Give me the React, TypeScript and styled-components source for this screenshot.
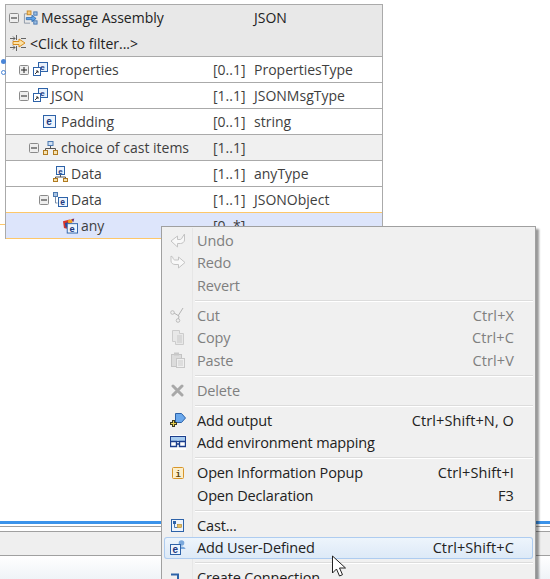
import React from "react";
import styled, { createGlobalStyle } from "styled-components";

const Global = createGlobalStyle`
  html, body { margin: 0; padding: 0; background: #fff; overflow: hidden; }
  body { font-family: "Open Sans", "Liberation Sans", sans-serif; }
`;

const Page = styled.div`
  position: relative;
  width: 550px;
  height: 579px;
  overflow: hidden;
  display: flex;
  flex-direction: column;
`;

const Table = styled.div`
  width: 378px;
  margin: 4px 0 0 5px;
  border: 1px solid #aaaaaa;
  border-bottom: 0;
  box-sizing: border-box;
  font-size: 14px;
  color: #3f3f3f;
`;

const Header = styled.div`
  background: #e8e8e8;
  height: 52px;
  border-bottom: 1px solid #aaaaaa;
  box-sizing: border-box;
`;

const HeaderRow = styled.div`
  display: grid;
  grid-template-columns: 207px 41px 1fr;
  height: 25px;
  align-items: center;
  color: #222;
`;

const FilterRow = styled.div`
  display: flex;
  align-items: center;
  height: 26px;
  padding-left: 4px;
  gap: 4px;
  color: #222;
`;

const Row = styled.div<{ $tone?: "plain" | "group" | "selected" }>`
  display: grid;
  grid-template-columns: 207px 41px 1fr;
  height: 26px;
  align-items: center;
  box-sizing: border-box;
  background: ${(p) =>
    p.$tone === "group" ? "#f0f0f0" : p.$tone === "selected" ? "#dde5fb" : "#fff"};
  border-bottom: 1px solid ${(p) => (p.$tone === "selected" ? "#fdc76a" : "#aaaaaa")};
  ${(p) => p.$tone === "selected" && "box-shadow: 0 -1px 0 #fdc76a;"}
`;

const NameCell = styled.div<{ $level: number }>`
  display: flex;
  align-items: center;
  padding-left: ${(p) => 3 + p.$level * 10}px;
`;

const ExpanderSlot = styled.span`
  display: inline-flex;
  width: 14px;
  flex: none;
`;

const Expander = styled.svg`
  width: 10px;
  height: 10px;
  display: block;
`;

const IconSlot = styled.span`
  display: inline-flex;
  width: 15px;
  height: 16px;
  margin-right: 3px;
  flex: none;
  align-items: center;
`;

const BlueDot = styled.span`
  position: absolute;
  left: 1px;
  top: 59px;
  width: 5px;
  height: 5px;
  background: #4a86d8;
  border-radius: 50%;
`;

const HollowDot = styled.span`
  position: absolute;
  left: 1px;
  top: 70px;
  width: 3px;
  height: 3px;
  border: 1px solid #4a86d8;
  border-radius: 50%;
`;

const OrangeTick = styled.span`
  position: absolute;
  left: 0;
  top: 224px;
  width: 5px;
  height: 1px;
  background: #fdc76a;
`;

const Spacer = styled.div`
  flex: 1;
`;

const Footer = styled.div`
  flex: none;
`;

const BlueRule = styled.div`
  height: 3px;
  background: #3b93ea;
`;

const TabStrip = styled.div`
  height: 4px;
  margin-top: 2px;
  background: #fff;
  border-top: 1px solid #a0a0a0;
  border-bottom: 1px solid #a0a0a0;
`;

const GreyBand = styled.div`
  height: 23px;
  background: #efefef;
  border-bottom: 1px solid #a0a0a0;
`;

const FadeBand = styled.div`
  height: 23px;
  background: linear-gradient(#ffffff, #eff3f7);
`;

const Menu = styled.div`
  position: absolute;
  left: 161px;
  top: 226px;
  width: 375px;
  height: 370px;
  box-sizing: border-box;
  background: #f0f0f0;
  border: 1px solid #a0a0a0;
  box-shadow: 3px 3px 2px rgba(0, 0, 0, 0.4);
  padding: 2px 2px;
  font-size: 14.5px;
  letter-spacing: -0.15px;
  color: #222;
`;

const Gutter = styled.span`
  position: absolute;
  left: 30px;
  top: 1px;
  bottom: 0;
  width: 1px;
  background: #e6e6e6;
`;

const Item = styled.div<{ $disabled?: boolean; $hover?: boolean }>`
  position: relative;
  display: grid;
  grid-template-columns: 33px 1fr auto;
  align-items: center;
  height: 22.5px;
  box-sizing: border-box;
  padding-right: 19px;
  color: ${(p) => (p.$disabled ? "#7f7f7f" : "#222")};
  ${(p) =>
    p.$hover &&
    `
    background: linear-gradient(#eef5fc, #dce9f7);
    box-shadow: inset 0 0 0 1px #aeccf0;
    border-radius: 3px;
  `}
`;

const ItemIcon = styled.span`
  display: flex;
  justify-content: center;
  padding-right: 6px;
`;

const Shortcut = styled.span`
  letter-spacing: 0.1px;
`;

const Separator = styled.div`
  height: 1px;
  margin: 3px 0 3.5px 31px;
  background: #dcdcdc;
  box-shadow: 0 1px 0 #fff;
`;

const Pointer = styled.svg`
  position: absolute;
  left: 331px;
  top: 555px;
  width: 18px;
  height: 24px;
`;

const Plus = ({ open }: { open?: boolean }) => (
  <Expander viewBox="0 0 10 10">
    <rect x="0.5" y="0.5" width="9" height="9" rx="1" fill="#eee" stroke="#8a8a8a" />
    <path d="M2 5h6" stroke="#222" />
    {!open && <path d="M5 2v6" stroke="#222" />}
  </Expander>
);

const ElementRef = () => (
  <svg width="15" height="15" viewBox="0 0 15 15">
    <rect x="5.5" y="0.5" width="9" height="9" fill="#e8f0fb" stroke="#2d62a8" />
    <text x="7.3" y="8" fontSize="8" fontWeight="700" fill="#20387f" fontFamily="Liberation Sans">e</text>
    <rect x="0.5" y="5.5" width="7" height="8" fill="#fff" stroke="#2d62a8" />
    <path d="M2 12l3-3M3 9h2v2" stroke="#333" fill="none" />
  </svg>
);

const ElementBox = () => (
  <svg width="13" height="13" viewBox="0 0 13 13">
    <rect x="0.5" y="0.5" width="12" height="12" fill="#eef4fc" stroke="#2d62a8" />
    <text x="3.2" y="10" fontSize="10" fontWeight="700" fill="#20387f" fontFamily="Liberation Sans">e</text>
  </svg>
);

const Assembly = () => (
  <svg width="16" height="16" viewBox="0 0 16 16">
    <path d="M1.5 3.5h4M1.5 3.5v10h6" stroke="#8c98a8" fill="none" />
    <rect x="4.5" y="0.5" width="4" height="4" fill="#f7c877" stroke="#c98a25" />
    <rect x="11.5" y="1.5" width="3.5" height="3.5" fill="#9cc0e4" stroke="#4a78b0" />
    <rect x="11.5" y="11" width="3.5" height="3.5" fill="#9cc0e4" stroke="#4a78b0" />
    <path d="M3.5 7.5h6V5l4.5 3.5L9.5 12V9.8h-6z" fill="#5aa0e6" stroke="#1d5aa0" strokeWidth="0.7" />
  </svg>
);

const FilterIcon = () => (
  <svg width="16" height="16" viewBox="0 0 16 16">
    <path d="M0 3.5h5M0 12.5h5M3 1.5l2 2-2 2M3 10.500l2 2-2 2M6.500 0v5M6.500 11v5M11 3.500h5M11 12.500h5" stroke="#555" fill="none" strokeWidth="0.9" />
    <path d="M3 6.500h6V4l6 4-6 4V9.500H3z" fill="#fbe2a8" stroke="#d88c1c" strokeWidth="1" />
  </svg>
);

const Choice = () => (
  <svg width="15" height="14" viewBox="0 0 15 14">
    <rect x="5" y="0.5" width="5" height="4" fill="#cfe0f4" stroke="#4a78b0" />
    <path d="M7.5 5v3M2.5 10V7.5h10V10" stroke="#555" fill="none" />
    <rect x="0.5" y="9.500" width="4" height="4" fill="#f7e3b0" stroke="#b07a20" />
    <rect x="10.500" y="9.500" width="4" height="4" fill="#f7e3b0" stroke="#b07a20" />
  </svg>
);

const DataChoice = () => (
  <svg width="15" height="16" viewBox="0 0 15 16">
    <rect x="3.500" y="0.5" width="8" height="8" fill="#eef4fc" stroke="#2d62a8" />
    <text x="5.2" y="7.5" fontSize="8" fontWeight="700" fill="#20387f" fontFamily="Liberation Sans">e</text>
    <path d="M7.5 9v2M2.5 13v-2h10v2" stroke="#555" fill="none" />
    <rect x="0.5" y="12.500" width="4" height="3" fill="#f7e3b0" stroke="#b07a20" />
    <rect x="10.500" y="12.500" width="4" height="3" fill="#f7e3b0" stroke="#b07a20" />
  </svg>
);

const DataTree = () => (
  <svg width="15" height="16" viewBox="0 0 15 16">
    <rect x="0.5" y="0.5" width="4" height="4" fill="#a8c4e4" stroke="#4a78b0" />
    <path d="M2.5 5v6h2" stroke="#7a8ea8" fill="none" />
    <rect x="5.500" y="5.500" width="9" height="9" fill="#eef4fc" stroke="#2d62a8" />
    <text x="7.2" y="13" fontSize="8.5" fontWeight="700" fill="#20387f" fontFamily="Liberation Sans">e</text>
  </svg>
);

const AnyIcon = () => (
  <svg width="16" height="16" viewBox="0 0 16 16">
    <path d="M0 3l7-2 3 3-4 2-2 5-3-1z" fill="#d8342a" />
    <path d="M5 2l6-2-1 4-4 2z" fill="#f0a020" />
    <path d="M2 5l3-1 1 3-3 3z" fill="#28489c" />
    <path d="M9 1l3-1-1 4z" fill="#6a2a80" />
    <rect x="4.500" y="5.500" width="11" height="10" fill="#eef4fc" stroke="#2d62a8" />
    <text x="7" y="14" fontSize="10" fontWeight="700" fill="#20387f" fontFamily="Liberation Sans">e</text>
  </svg>
);

const UndoIcon = () => (
  <svg width="16" height="15" viewBox="0 0 16 15">
    <path d="M14.500 1v6c0 2-2 3.500-4 3.500H7.500V14L1 8l6.500-5v3.500h2.500c1 0 2-1 2.500-2.500z" fill="#f8f8f8" stroke="#c4c4c4" />
  </svg>
);

const RedoIcon = () => (
  <svg width="16" height="15" viewBox="0 0 16 15">
    <path d="M1 1v5c0 2 2 3.500 4 3.500h3.500V13L15 7.500 8.500 2v3H5C4 5 3 4 3 2.500z" fill="#f8f8f8" stroke="#c4c4c4" />
  </svg>
);

const CutIcon = () => (
  <svg width="16" height="16" viewBox="0 0 16 16">
    <path d="M13 1L8 9M4 6l5 3-.5 3" stroke="#b4b4b4" fill="none" />
    <circle cx="2.500" cy="5.500" r="1.800" fill="none" stroke="#bcbcbc" />
    <circle cx="8" cy="13.500" r="1.800" fill="none" stroke="#bcbcbc" />
  </svg>
);

const CopyIcon = () => (
  <svg width="14" height="15" viewBox="0 0 14 15">
    <path d="M1.500 0.5h7v3h4v11h-8v-3h-3z" fill="#e8e8e8" stroke="#cccccc" />
    <path d="M6 6h5M6 8h5M6 10h5M6 12h5" stroke="#c8c8c8" />
  </svg>
);

const PasteIcon = () => (
  <svg width="14" height="16" viewBox="0 0 14 16">
    <rect x="0.5" y="2.500" width="10" height="12" fill="#dcdcdc" stroke="#c4c4c4" />
    <rect x="3" y="0.5" width="5" height="3" fill="#c8c8c8" />
    <rect x="5.500" y="6.500" width="8" height="9" fill="#efefef" stroke="#c8c8c8" />
    <path d="M7 9h5M7 11h5M7 13h5" stroke="#cccccc" />
  </svg>
);

const DeleteIcon = () => (
  <svg width="13" height="13" viewBox="0 0 13 13">
    <path d="M2 2l9 9M11 2l-9 9" stroke="#a8a8a8" strokeWidth="3" strokeLinecap="round" />
  </svg>
);

const OutputIcon = () => (
  <svg width="16" height="14" viewBox="0 0 16 14">
    <path d="M5.500 0.5h6l4 4.500-4 4.500h-6z" fill="#6aa8ec" stroke="#2d62a8" />
    <path d="M0 10.500h7M3.500 7v7" stroke="#3c3c20" strokeWidth="3" />
    <path d="M1 10.500h5M3.500 8v5" stroke="#e8d050" />
  </svg>
);

const EnvIcon = () => (
  <svg width="16" height="15" viewBox="0 0 16 15">
    <rect width="16" height="15" fill="#fff" />
    <rect x="0.5" y="1.500" width="15" height="5" fill="#a8cdf0" stroke="#1c3e8c" />
    <path d="M0.5 6.500h6v5h-6zM9.500 6.500h6v5h-6zM6.500 9h3" fill="#fff" stroke="#1c3e8c" strokeWidth="1.400" />
  </svg>
);

const InfoIcon = () => (
  <svg width="12" height="12" viewBox="0 0 12 12">
    <rect x="0.5" y="0.5" width="11" height="11" rx="1" fill="#fbeecb" stroke="#d8962a" />
    <text x="3.500" y="9.500" fontSize="9" fontWeight="700" fill="#5a4210" fontFamily="Liberation Mono">i</text>
  </svg>
);

const CastIcon = () => (
  <svg width="13" height="13" viewBox="0 0 13 13">
    <rect x="0.5" y="0.5" width="12" height="12" fill="#eef4fc" stroke="#2d62a8" />
    <path d="M3.500 3v5.500h3" stroke="#4a78b0" fill="none" />
    <rect x="2" y="2" width="3" height="3" fill="#2d62a8" />
    <rect x="6.500" y="5.500" width="4" height="3" fill="#e8c060" stroke="#b08020" strokeWidth="0.6" />
  </svg>
);

const UserDefinedIcon = () => (
  <svg width="16" height="15" viewBox="0 0 16 15">
    <circle cx="11.500" cy="3" r="2.800" fill="#7aa8dc" />
    <path d="M7.500 9c0-3.500 8-3.500 8 0z" fill="#7aa8dc" />
    <rect x="0.5" y="4.500" width="10" height="10" fill="#eef4fc" stroke="#2d62a8" />
    <text x="2.500" y="13" fontSize="10" fontWeight="700" fill="#20387f" fontFamily="Liberation Sans">e</text>
  </svg>
);

const ConnectionIcon = () => (
  <svg width="16" height="14" viewBox="0 0 16 14">
    <path d="M1 3.500h7v8h7" stroke="#2d62a8" strokeWidth="2" fill="none" />
  </svg>
);

type TreeRow = {
  level: number;
  expander?: "plus" | "minus";
  icon: React.ReactNode;
  name: string;
  card?: string;
  type?: string;
  tone?: "plain" | "group" | "selected";
};

const rows: TreeRow[] = [
  { level: 1, expander: "plus", icon: <ElementRef />, name: "Properties", card: "[0..1]", type: "PropertiesType" },
  { level: 1, expander: "minus", icon: <ElementRef />, name: "JSON", card: "[1..1]", type: "JSONMsgType" },
  { level: 2, icon: <ElementBox />, name: "Padding", card: "[0..1]", type: "string" },
  { level: 2, expander: "minus", icon: <Choice />, name: "choice of cast items", card: "[1..1]", tone: "group" },
  { level: 3, icon: <DataChoice />, name: "Data", card: "[1..1]", type: "anyType" },
  { level: 3, expander: "minus", icon: <DataTree />, name: "Data", card: "[1..1]", type: "JSONObject" },
  { level: 4, icon: <AnyIcon />, name: "any", card: "[0..*]", tone: "selected" },
];

type MenuEntry =
  | "sep"
  | { label: string; shortcut?: string; icon?: React.ReactNode; disabled?: boolean; hover?: boolean };

const menu: MenuEntry[] = [
  { label: "Undo", icon: <UndoIcon />, disabled: true },
  { label: "Redo", icon: <RedoIcon />, disabled: true },
  { label: "Revert", disabled: true },
  "sep",
  { label: "Cut", shortcut: "Ctrl+X", icon: <CutIcon />, disabled: true },
  { label: "Copy", shortcut: "Ctrl+C", icon: <CopyIcon />, disabled: true },
  { label: "Paste", shortcut: "Ctrl+V", icon: <PasteIcon />, disabled: true },
  "sep",
  { label: "Delete", icon: <DeleteIcon />, disabled: true },
  "sep",
  { label: "Add output", shortcut: "Ctrl+Shift+N, O", icon: <OutputIcon /> },
  { label: "Add environment mapping", icon: <EnvIcon /> },
  "sep",
  { label: "Open Information Popup", shortcut: "Ctrl+Shift+I", icon: <InfoIcon /> },
  { label: "Open Declaration", shortcut: "F3" },
  "sep",
  { label: "Cast...", icon: <CastIcon /> },
  { label: "Add User-Defined", shortcut: "Ctrl+Shift+C", icon: <UserDefinedIcon />, hover: true },
  "sep",
  { label: "Create Connection", icon: <ConnectionIcon /> },
];

export default function App() {
  return (
    <Page>
      <Global />
      <Table>
        <Header>
          <HeaderRow>
            <NameCell $level={0}>
              <ExpanderSlot>
                <Plus open />
              </ExpanderSlot>
              <IconSlot>
                <Assembly />
              </IconSlot>
              Message Assembly
            </NameCell>
            <span />
            <span>JSON</span>
          </HeaderRow>
          <FilterRow>
            <FilterIcon />
            &lt;Click to filter...&gt;
          </FilterRow>
        </Header>
        {rows.map((row, i) => (
          <Row key={i} $tone={row.tone}>
            <NameCell $level={row.level}>
              <ExpanderSlot>
                {row.expander && <Plus open={row.expander === "minus"} />}
              </ExpanderSlot>
              <IconSlot>{row.icon}</IconSlot>
              {row.name}
            </NameCell>
            <span>{row.card}</span>
            <span>{row.type}</span>
          </Row>
        ))}
      </Table>
      <BlueDot />
      <HollowDot />
      <OrangeTick />
      <Spacer />
      <Footer>
        <BlueRule />
        <TabStrip />
        <GreyBand />
        <FadeBand />
      </Footer>
      <Menu>
        <Gutter />
        {menu.map((entry, i) =>
          entry === "sep" ? (
            <Separator key={i} />
          ) : (
            <Item key={i} $disabled={entry.disabled} $hover={entry.hover}>
              <ItemIcon>{entry.icon}</ItemIcon>
              <span>{entry.label}</span>
              <Shortcut>{entry.shortcut}</Shortcut>
            </Item>
          )
        )}
      </Menu>
      <Pointer viewBox="0 0 18 24">
        <path d="M1.500 1v17l4-4 3 7 3-1.300-3-6.700h6z" fill="#fff" stroke="#222" strokeWidth="1" />
      </Pointer>
    </Page>
  );
}
